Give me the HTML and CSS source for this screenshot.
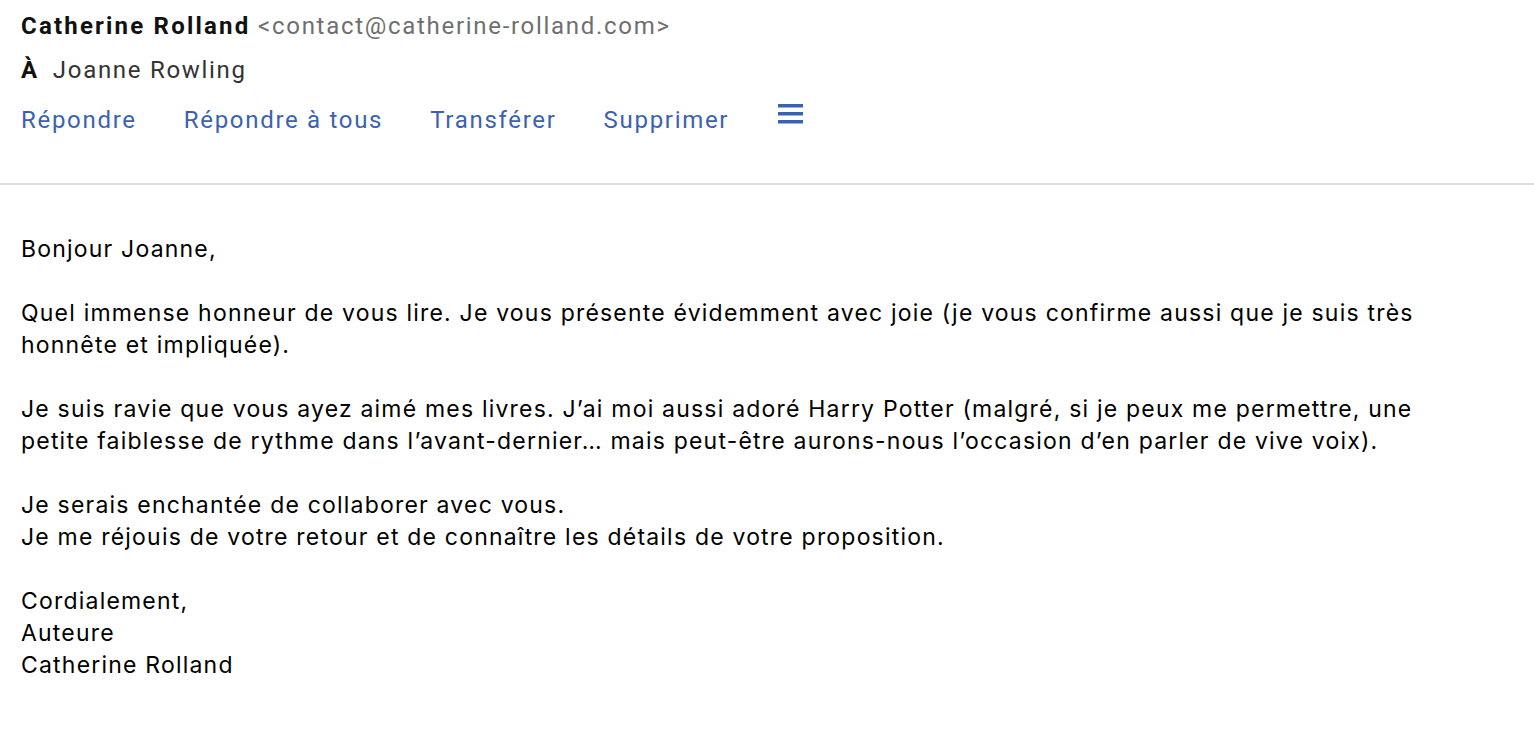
FILE: index.html
```html
<!DOCTYPE html>
<html lang="fr">
<head>
<meta charset="utf-8">
<title>Message</title>
<link rel="stylesheet" href="styles.css">
</head>
<body>
<header class="mail-head">
  <div class="from-line"><span class="from-name">Catherine Rolland</span> <span class="from-addr">&lt;contact@catherine-rolland.com&gt;</span></div>
  <div class="to-line"><span class="to-label">À</span><span class="to-name">Joanne Rowling</span></div>
  <nav class="actions">
    <a class="action" href="#">Répondre</a>
    <a class="action" href="#">Répondre à tous</a>
    <a class="action" href="#">Transférer</a>
    <a class="action" href="#">Supprimer</a>
    <a class="action menu" href="#" aria-label="Menu"><svg width="25" height="20" viewBox="0 0 25 20"><rect x="0" y="0" width="25" height="3.5" fill="currentColor"/><rect x="0" y="8" width="25" height="3.5" fill="currentColor"/><rect x="0" y="16" width="25" height="3.5" fill="currentColor"/></svg></a>
  </nav>
</header>
<main class="mail-body">
  <p>Bonjour Joanne,</p>
  <p>Quel immense honneur de vous lire. Je vous présente évidemment avec joie (je vous confirme aussi que je suis très<br>honnête et impliquée).</p>
  <p>Je suis ravie que vous ayez aimé mes livres. J’ai moi aussi adoré Harry Potter (malgré, si je peux me permettre, une<br>petite faiblesse de rythme dans l’avant-dernier… mais peut-être aurons-nous l’occasion d’en parler de vive voix).</p>
  <p>Je serais enchantée de collaborer avec vous.<br>Je me réjouis de votre retour et de connaître les détails de votre proposition.</p>
  <p>Cordialement,<br>Auteure<br>Catherine Rolland</p>
</main>
</body>
</html>
```
FILE: styles.css
```css
html, body {
  margin: 0;
  padding: 0;
  background: #ffffff;
}
body {
  font-family: Roboto, "Liberation Sans", sans-serif;
  color: #000;
}
.mail-head {
  padding: 9px 21px 0;
  border-bottom: 2px solid #dcdcdc;
  height: 185px;
  box-sizing: border-box;
}
.from-line {
  font-size: 24px;
  line-height: 34px;
  letter-spacing: 1.7px;
  white-space: nowrap;
}
.from-name {
  font-weight: 700;
  letter-spacing: 2.2px;
  color: #111;
}
.from-addr {
  color: #6f6f6f;
}
.to-line {
  margin-top: 10px;
  font-size: 24px;
  line-height: 34px;
  letter-spacing: 1.7px;
  display: flex;
  gap: 14px;
}
.to-label {
  font-weight: 700;
  color: #111;
}
.to-name {
  color: #333;
}
.actions {
  margin-top: 16px;
  display: flex;
  align-items: center;
  gap: 47px;
}
.action {
  font-size: 24px;
  line-height: 34px;
  letter-spacing: 1.7px;
  color: #3b62b0;
  text-decoration: none;
}
.menu {
  display: flex;
  align-items: center;
  margin-top: -12px;
  margin-left: 2px;
}
.mail-body {
  padding: 48px 21px 0;
  font-family: Inter, "Noto Sans", sans-serif;
  font-size: 23px;
  line-height: 32px;
  letter-spacing: 1.2px;
  color: #000;
}
.mail-body p {
  margin: 0 0 32px;
  white-space: nowrap;
}
```
